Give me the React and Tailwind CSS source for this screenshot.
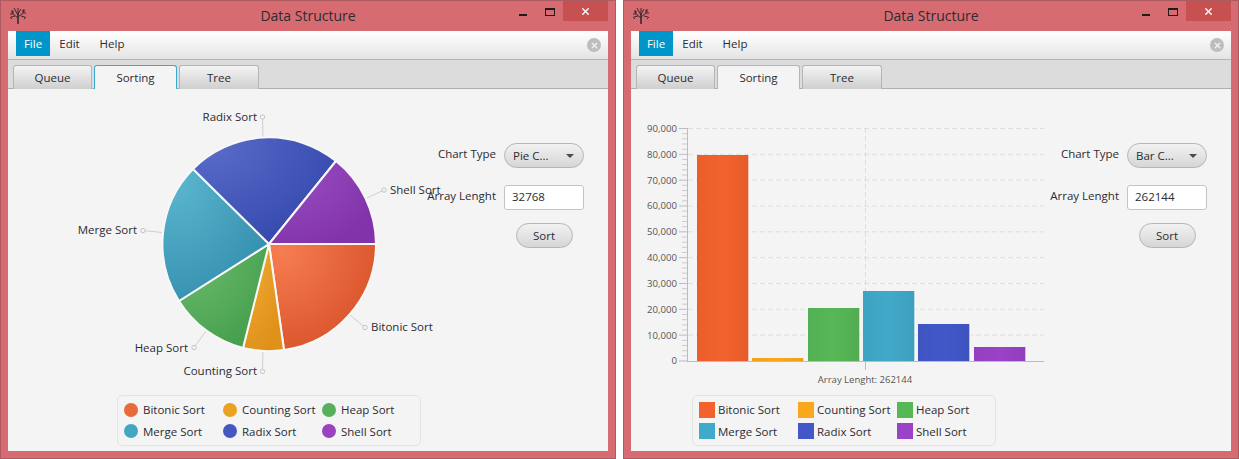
import React from 'react';
import { X } from 'lucide-react';

const FONT = "font-['Open_Sans','Noto_Sans',sans-serif]";

const LEGEND = [
	{ name: 'Bitonic Sort', round: 'bg-[#e8693a]', square: 'bg-[#f3622d]' },
	{ name: 'Counting Sort', round: 'bg-[#eda122]', square: 'bg-[#fba71b]' },
	{ name: 'Heap Sort', round: 'bg-[#57b05c]', square: 'bg-[#57b757]' },
	{ name: 'Merge Sort', round: 'bg-[#45a6c4]', square: 'bg-[#41a9c9]' },
	{ name: 'Radix Sort', round: 'bg-[#4558c2]', square: 'bg-[#4258c9]' },
	{ name: 'Shell Sort', round: 'bg-[#9a42c2]', square: 'bg-[#9a42c8]' },
];

// wedge paths in page coordinates, measured off the screenshot
const WEDGES = [
	{ id: 'bitonic', from: '#f67d50', to: '#d9532a', d: 'M269 244L376 244A107 107 0 0 1 284 350Z' },
	{ id: 'counting', from: '#f0ad35', to: '#e0911a', d: 'M269 244L284 350A107 107 0 0 1 243 348Z' },
	{ id: 'heap', from: '#6cbd6c', to: '#47a04f', d: 'M269 244L243 348A107 107 0 0 1 179 301Z' },
	{ id: 'merge', from: '#5bb6cf', to: '#3590b0', d: 'M269 244L179 301A107 107 0 0 1 193 169Z' },
	{ id: 'radix', from: '#5a6cc9', to: '#3549ae', d: 'M269 244L193 169A107 107 0 0 1 336 161Z' },
	{ id: 'shell', from: '#9c50c4', to: '#8233aa', d: 'M269 244L336 161A107 107 0 0 1 376 244Z' },
];

const PIE_LABELS = [
	{ text: 'Radix Sort', x: 257, y: 117, anchor: 'end', dot: [262.5, 117], end: [263, 137] },
	{ text: 'Shell Sort', x: 390, y: 190, anchor: 'start', dot: [384, 190], end: [366, 198.5] },
	{ text: 'Merge Sort', x: 137, y: 230, anchor: 'end', dot: [143, 230.5], end: [162, 232.5] },
	{ text: 'Heap Sort', x: 188, y: 347.5, anchor: 'end', dot: [194, 347.5], end: [206, 331] },
	{ text: 'Counting Sort', x: 257, y: 371, anchor: 'end', dot: [262.5, 371.5], end: [263, 352] },
	{ text: 'Bitonic Sort', x: 371, y: 327, anchor: 'start', dot: [365, 327.5], end: [350, 315] },
];

const BARS = [
	{ x: 697, top: 155, color: '#f3622d' },
	{ x: 752, top: 358, color: '#fba71b' },
	{ x: 808, top: 308, color: '#57b757' },
	{ x: 863, top: 291, color: '#41a9c9' },
	{ x: 918, top: 324, color: '#4258c9' },
	{ x: 974, top: 347, color: '#9a42c8' },
];

const TICKS = ['90,000', '80,000', '70,000', '60,000', '50,000', '40,000', '30,000', '20,000', '10,000', '0'];

function TreeIcon() {
	return (
		<svg width="18" height="18" viewBox="0 0 18 18" fill="none" stroke="#3a2a2c" strokeWidth="1">
			<path d="M9 17V6" strokeWidth="1.6" />
			<path d="M9 11L4 7M9 10L14 6M9 8L6 3M9 7L12 2M4 7L1 7M4 7L3 3M14 6L17 6M14 6L15 2M6 3L5 1M9 6L9 1M6 9L2 10M12 9L16 10M2 5L5 5M13 4L16 4M1 10L3 12M17 10L15 12" />
		</svg>
	);
}

function TitleBar() {
	return (
		<div className="relative flex h-[30px] flex-none items-start">
			<div className="ml-[1px] mt-[6px]">
				<TreeIcon />
			</div>
			<div className="absolute inset-x-0 top-[5px] text-center text-[14px] leading-[20px] text-[#2b2b33]">Data Structure</div>
			<div className="ml-auto flex items-start">
				<div className="mr-[18px] mt-[13px] h-[2px] w-[8px] bg-[#1c1c1c]" />
				<div className="mr-[8px] mt-[7px] h-[8px] w-[10px] border border-t-2 border-[#1c1c1c]" />
				<div className="flex h-[20px] w-[45px] items-center justify-center bg-[#c75050]">
					<X size={11} strokeWidth={3} className="text-white" />
				</div>
			</div>
		</div>
	);
}

function MenuBar() {
	return (
		<div className="flex h-[29px] flex-none items-start border-b border-[#b4b4b4] bg-gradient-to-b from-white to-[#e4e4e4] pl-[8px] pr-[7px] text-[11.5px] text-[#2b2b33]">
			<div className="flex h-[25px] w-[34px] items-center justify-center bg-[#0096c9] text-white">File</div>
			<div className="flex h-[25px] w-[39px] items-center justify-center">Edit</div>
			<div className="flex h-[25px] w-[46px] items-center justify-center">Help</div>
			<div className="ml-auto mt-[7px] flex h-[14px] w-[14px] items-center justify-center rounded-full bg-[#bdbdbd]">
				<X size={9} strokeWidth={3.5} className="text-[#f2f2f2]" />
			</div>
		</div>
	);
}

function Tab({ label, width, active, focused }) {
	let look = 'border-[#b5b5b5] bg-gradient-to-b from-[#f4f4f4] to-[#cfcfcf]';
	if (active) look = 'border-[#b5b5b5] bg-[#f4f4f4]';
	if (focused) look = 'border-[#39a9d1] bg-[#f4f4f4]';
	return (
		<div className={`-mb-px flex h-[24px] items-center justify-center rounded-t-[3px] border border-b-0 text-[11.5px] text-[#2b2b33] ${width} ${look}`}>
			{label}
		</div>
	);
}

function TabBar({ focused }) {
	return (
		<div className="flex h-[29px] flex-none items-end gap-[2px] border-b border-[#afafaf] bg-[#dcdcdc] pl-[5px]">
			<Tab label="Queue" width="w-[79px]" />
			<Tab label="Sorting" width="w-[83px]" active focused={focused} />
			<Tab label="Tree" width="w-[80px]" />
		</div>
	);
}

function Controls({ chart, size }) {
	return (
		<div className="mr-[24px] mt-[54px] grid grid-cols-[auto_80px] content-start items-center gap-x-[8px] gap-y-[17px] text-[11.5px] text-[#2b2b33]">
			<div className="-mt-[3px] justify-self-end whitespace-nowrap">Chart Type</div>
			<div className="flex h-[25px] items-center justify-between rounded-full border border-[#b5b5b5] bg-gradient-to-b from-[#f2f2f2] to-[#d6d6d6] pl-[8px] pr-[9px]">
				<span>{chart}</span>
				<svg width="8" height="4" viewBox="0 0 8 4">
					<path d="M0 0H8L4 4Z" fill="#4a4a4a" />
				</svg>
			</div>
			<div className="-mt-[3px] justify-self-end whitespace-nowrap">Array Lenght</div>
			<div className="flex h-[25px] items-center rounded-[3px] border border-[#c4c4c4] bg-white pb-[1px] pl-[7px]">{size}</div>
			<div />
			<div className="-mt-[4px] flex h-[25px] w-[57px] items-center justify-center justify-self-center rounded-full border border-[#b5b5b5] bg-gradient-to-b from-[#f2f2f2] to-[#d6d6d6]">
				Sort
			</div>
		</div>
	);
}

function Legend({ kind, left }) {
	return (
		<div className={`grid h-[51px] w-[304px] grid-cols-[99px_99px_99px] items-center rounded-[5px] border border-[#e4e4e4] py-[3px] pl-[6px] text-[11.5px] text-[#2b2b33] ${left}`}>
			{LEGEND.map((item) => (
				<div key={item.name} className={`flex items-center whitespace-nowrap ${kind === 'pie' ? 'gap-[5px]' : 'gap-[3px]'}`}>
					{kind === 'pie' ? (
						<span className={`h-[14px] w-[14px] rounded-full ${item.round}`} />
					) : (
						<span className={`h-[16px] w-[16px] ${item.square}`} />
					)}
					{item.name}
				</div>
			))}
		</div>
	);
}

function PieChart() {
	return (
		<svg width="420" height="306" viewBox="8 89 420 306" className="block overflow-visible">
			<defs>
				{WEDGES.map((w) => (
					<radialGradient key={w.id} id={w.id} cx="12%" cy="8%" r="100%">
						<stop offset="0%" stopColor={w.from} />
						<stop offset="100%" stopColor={w.to} />
					</radialGradient>
				))}
			</defs>
			{PIE_LABELS.map((l) => (
				<g key={l.text}>
					<line x1={l.dot[0]} y1={l.dot[1]} x2={l.end[0]} y2={l.end[1]} stroke="#cfcfcf" />
					<circle cx={l.dot[0]} cy={l.dot[1]} r="2.2" fill="#f4f4f4" stroke="#c4c4c4" />
					<text x={l.x} y={l.y + 4} textAnchor={l.anchor} fontSize="11.5" fill="#2b2b33">
						{l.text}
					</text>
				</g>
			))}
			{WEDGES.map((w) => (
				<path key={w.id} d={w.d} fill={`url(#${w.id})`} stroke="#f7f7f7" strokeWidth="2" strokeLinejoin="round" />
			))}
		</svg>
	);
}

function BarChart() {
	const y0 = 361;
	const step = 25.83;
	const minors = [];
	for (let i = 0; i < 45; i++) {
		if (i % 5 !== 0) minors.push(y0 - (i * step) / 5);
	}
	return (
		<svg width="420" height="306" viewBox="631 89 420 306" className="block overflow-visible">
			<defs>
				<linearGradient id="bar-shade">
					<stop offset="0%" stopColor="#000000" stopOpacity="0.04" />
					<stop offset="50%" stopColor="#000000" stopOpacity="0" />
					<stop offset="100%" stopColor="#000000" stopOpacity="0.06" />
				</linearGradient>
			</defs>
			{/* grid */}
			{TICKS.slice(0, -1).map((t, i) => {
				const y = 128.5 + i * step;
				return <line key={t} x1="688" x2="1044" y1={y} y2={y} stroke="#dedede" strokeDasharray="5 3" />;
			})}
			<line x1="865.5" x2="865.5" y1="128" y2="361" stroke="#dedede" strokeDasharray="5 3" />
			{/* bars */}
			{BARS.map((b) => (
				<g key={b.x}>
					<rect x={b.x} y={b.top} width="51.5" height={y0 - b.top} fill={b.color} />
					<rect x={b.x} y={b.top} width="51.5" height={y0 - b.top} fill="url(#bar-shade)" />
					<line x1={b.x + 52} x2={b.x + 52} y1={b.top} y2={y0} stroke="#ffffff" strokeOpacity="0.7" />
				</g>
			))}
			{/* axes */}
			<line x1="687.5" x2="687.5" y1="128" y2="361.5" stroke="#bcbcbc" />
			<line x1="687" x2="1044" y1="361.5" y2="361.5" stroke="#bcbcbc" />
			<line x1="865.5" x2="865.5" y1="361" y2="370" stroke="#bcbcbc" />
			{minors.map((y) => (
				<line key={y} x1="682" x2="687" y1={y} y2={y} stroke="#cccccc" />
			))}
			{TICKS.map((t, i) => {
				const y = 128.5 + i * step;
				return (
					<g key={t}>
						<line x1="679" x2="687" y1={y} y2={y} stroke="#bcbcbc" />
						<text x="677" y={y + 3.5} textAnchor="end" fontSize="9.6" fill="#555555">
							{t}
						</text>
					</g>
				);
			})}
			<text x="865" y="383" textAnchor="middle" fontSize="9.5" fill="#555555">
				Array Lenght: 262144
			</text>
		</svg>
	);
}

function ChartWindow({ focused, chart, legend, legendLeft, combo, size }) {
	return (
		<div className="flex h-[459px] w-[616px] flex-none flex-col border border-[#ad5b61] bg-[#d66b71] px-[7px] pb-[7px]">
			<TitleBar />
			<div className="flex min-h-0 flex-1 flex-col bg-[#f4f4f4]">
				<MenuBar />
				<TabBar focused={focused} />
				<div className="flex min-h-0 flex-1 justify-between">
					<div className="w-[415px] flex-none">
						{chart}
						<Legend kind={legend} left={legendLeft} />
					</div>
					<Controls chart={combo} size={size} />
				</div>
			</div>
		</div>
	);
}

export default function App() {
	return (
		<div className={`flex h-[459px] w-[1239px] gap-[7px] overflow-hidden bg-white ${FONT}`}>
			<ChartWindow focused chart={<PieChart />} legend="pie" legendLeft="ml-[109px]" combo="Pie C..." size="32768" />
			<ChartWindow chart={<BarChart />} legend="bar" legendLeft="ml-[61px]" combo="Bar C..." size="262144" />
		</div>
	);
}
